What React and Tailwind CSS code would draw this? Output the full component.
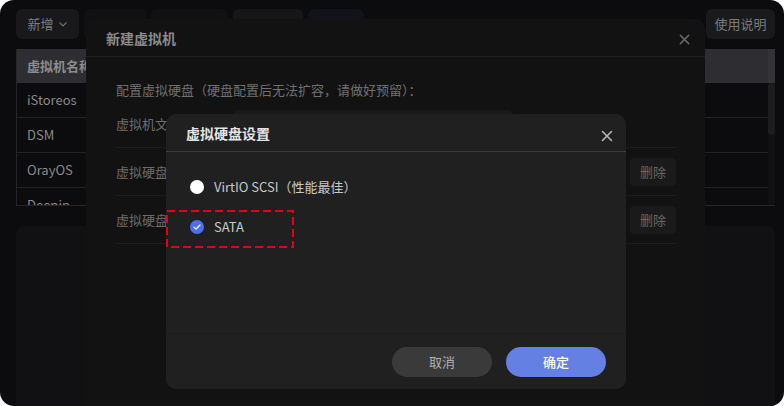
import React from "react";

const vmRows = ["iStoreos", "DSM", "OrayOS", "Deepin"];

const CloseIcon = ({ className }) => (
  <svg className={className} viewBox="0 0 12 12" fill="none" stroke="currentColor" strokeWidth="1.6" strokeLinecap="round">
    <path d="M1.5 1.5l9 9M10.5 1.5l-9 9" />
  </svg>
);

const Radio = ({ checked, label }) => (
  <label className="flex items-center h-[20px] gap-[10px] cursor-pointer">
    {checked ? (
      <span className="w-[14px] h-[14px] rounded-full bg-[#4c6ef5] flex items-center justify-center">
        <svg className="w-[10px] h-[10px]" viewBox="0 0 10 10" fill="none" stroke="#fff" strokeWidth="1.3" strokeLinecap="round" strokeLinejoin="round">
          <path d="M2 5.2l2 1.9 4-4.1" />
        </svg>
      </span>
    ) : (
      <span className="w-[14px] h-[14px] rounded-full bg-white" />
    )}
    <span className="text-[13px] text-[#c9c9c9]">{label}</span>
  </label>
);

// red dashed marker around the selected option
const Marker = () => (
  <svg className="absolute left-0 top-[58px] w-[128px] h-[38px]" viewBox="0 0 128 38" fill="none">
    <rect x="1" y="1" width="126" height="36" stroke="#e60012" strokeWidth="2" strokeDasharray="8 4" />
  </svg>
);

const DiskTypeDialog = () => (
  <div className="absolute left-[166px] top-[114px] w-[460px] h-[275px] bg-[#202020] rounded-[10px] flex flex-col">
    {/* Header */}
    <div className="h-[38px] pl-5 pr-[13px] flex items-center justify-between border-b border-[#3a3a3a] shrink-0">
      <h3 className="text-[14px] font-bold text-[#e4e4e4] pt-[1px]">虚拟硬盘设置</h3>
      <CloseIcon className="w-[12px] h-[12px] text-[#b8b8b8] mt-[6px]" />
    </div>

    {/* Options */}
    <div className="relative flex-1 pt-[25px] pl-6 flex flex-col gap-[20px]">
      <Radio label="VirtIO SCSI（性能最佳）" />
      <Radio checked label="SATA" />
      <Marker />
    </div>

    {/* Footer */}
    <div className="h-[56px] border-t border-[#1b1b1b] flex items-start justify-end gap-[14px] pt-[13px] pr-5 shrink-0">
      <button className="w-[100px] h-[30px] rounded-full bg-[#3a3a3a] text-[13px] text-[#b0b0b0]">取消</button>
      <button className="w-[100px] h-[30px] rounded-full bg-[#6480e2] text-[13px] text-white font-medium">确定</button>
    </div>
  </div>
);

const NewVmDialog = () => (
  <div className="absolute left-[86px] top-[19px] w-[619px] h-[400px] bg-[#121212] rounded-[10px]">
    <div className="h-[38px] pl-5 pr-[15px] flex items-center justify-between border-b border-[#222]">
      <h3 className="text-[14px] font-bold text-[#8a8a8a] pt-[1px]">新建虚拟机</h3>
      <CloseIcon className="w-[11px] h-[11px] text-[#666] mt-[4px]" />
    </div>
    <div className="pl-[30px] pr-[29px] pt-[23px]">
      <p className="text-[13px] leading-[20px] text-[#707070]">配置虚拟硬盘（硬盘配置后无法扩容，请做好预留）：</p>
      <div className="h-[48px] flex items-center border-b border-[#1d1d1d] relative">
        <span className="text-[13px] text-[#6c6c6c]">虚拟机文件</span>
        <div className="absolute left-[117px] top-[10px] w-[280px] h-[30px] rounded-md bg-[#191919]" />
      </div>
      {[0, 1].map((i) => (
        <div key={i} className="h-[48px] flex items-center justify-between border-b border-[#1d1d1d]">
          <span className="text-[13px] text-[#6c6c6c]">虚拟硬盘</span>
          <button className="w-[46px] h-[28px] rounded-[4px] bg-[#1a1a1a] text-[13px] text-[#676767]">删除</button>
        </div>
      ))}
    </div>
  </div>
);

export default function App() {
  return (
    <div className="w-[784px] h-[406px] bg-white font-['Noto_Sans_CJK_SC','Noto_Sans',sans-serif]">
      <div className="relative w-full h-full rounded-[14px] bg-[#0c0b0e] overflow-hidden">
        {/* Toolbar */}
        <div className="flex items-center gap-[5px] pl-4 pr-[9px] pt-[9px]">
          <button className="w-[63px] h-[30px] rounded-md bg-[#19191b] text-[13px] text-[#7d7d7d] flex items-center justify-center gap-1">
            新增
            <svg className="w-[10px] h-[10px]" viewBox="0 0 10 10" fill="none" stroke="#6d6d6d" strokeWidth="1.2">
              <path d="M1.5 3.5l3.5 3.5 3.5-3.5" />
            </svg>
          </button>
          <div className="w-[62px] h-[30px] rounded-l-md bg-[#111113]" />
          <div className="w-[77px] h-[30px] rounded-md bg-[#111113]" />
          <div className="w-[70px] h-[30px] rounded-md bg-[#161618]" />
          <div className="w-[56px] h-[30px] rounded-md bg-[#12131a]" />
          <div className="flex-1" />
          <button className="w-[69px] h-[30px] rounded-md bg-[#1a1a1c] text-[13px] text-[#7a7a7a]">使用说明</button>
        </div>

        {/* VM table */}
        <div className="ml-4 mr-[9px] mt-[10px] h-[157px] border-l border-b border-[#262628] overflow-hidden flex">
          <div className="flex-1 flex flex-col">
            <div className="h-[34px] shrink-0 bg-[#2d2d32] flex items-center px-[10px] text-[13px] font-bold text-[#8c8c8c]">
              虚拟机名称
            </div>
            {vmRows.map((name) => (
              <div key={name} className="h-[35px] shrink-0 flex items-center px-[10px] border-b border-[#232325] text-[13px] text-[#8a8a8a]">
                {name}
              </div>
            ))}
          </div>
          <div className="w-[7px] flex flex-col">
            <div className="h-[34px] bg-[#333338]" />
            <div className="flex-1 bg-[#111113] rounded-full">
              <div className="h-[52px] bg-[#1d1d20] rounded-full" />
            </div>
          </div>
        </div>

        {/* Lower card */}
        <div className="ml-4 mr-[9px] mt-[20px] h-[200px] rounded-lg bg-[#111113]" />

        <NewVmDialog />
        <DiskTypeDialog />
      </div>
    </div>
  );
}
